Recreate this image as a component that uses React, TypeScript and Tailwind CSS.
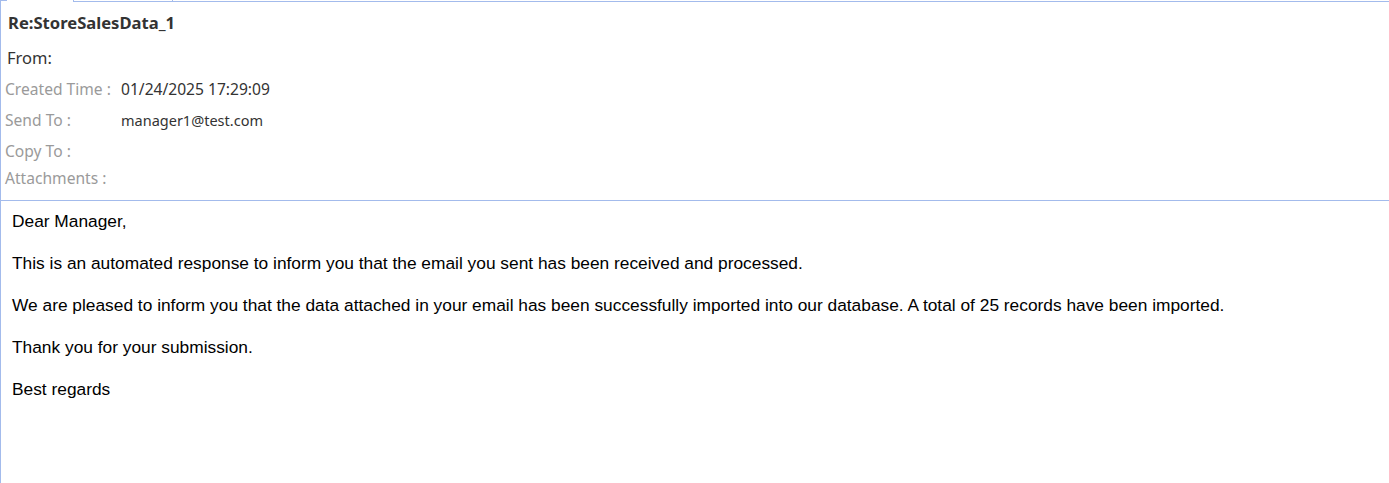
const rows = [
  { label: 'Created Time :', value: '01/24/2025 17:29:09', h: 'h-[31px]', size: 'text-[15.6px]' },
  { label: 'Send To :', value: 'manager1@test.com', h: 'h-[31px]', size: 'text-[14.5px]' },
  { label: 'Copy To :', value: '', h: 'h-[31px]', size: 'text-[15.6px]' },
  { label: 'Attachments :', value: '', h: 'h-[23px]', size: 'text-[15.6px]' },
]

const paragraphs = [
  'Dear Manager,',
  'This is an automated response to inform you that the email you sent has been received and processed.',
  'We are pleased to inform you that the data attached in your email has been successfully imported into our database. A total of 25 records have been imported.',
  'Thank you for your submission.',
  'Best regards',
]

export default function App() {
  return (
    <div className="w-[1389px] h-[483px] bg-white overflow-hidden">
      <div className="h-full border-l border-[#a3bbec] flex flex-col">
        {/* tab strip */}
        <div className="flex h-[2px]">
          <div className="w-[6px] border-t border-[#a3bbec]" />
          <div className="w-[66px]" />
          <div className="flex-1 border-b border-l border-[#a3bbec] flex">
            <div className="w-[99px] border-r border-[#a3bbec]" />
          </div>
        </div>

        {/* header */}
        <div className="font-['Noto_Sans','Open_Sans',sans-serif] text-[#333]">
          <div className="h-[41px] pl-[7px] pt-[11px] text-[16.6px] font-bold leading-[20px]">Re:StoreSalesData_1</div>
          <div className="h-[31px] pl-[6px] text-[16.5px] leading-[29px]">From:</div>
          {rows.map((r) => (
            <div key={r.label} className={`flex items-center text-[15.6px] ${r.h}`}>
              <div className="w-[120px] pl-[4px] text-[#9a9a9a]">{r.label}</div>
              <div className={`text-[#333] ${r.size}`}>{r.value}</div>
            </div>
          ))}
        </div>

        <div className="mt-[10px] border-t border-[#a3bbec]" />

        {/* body */}
        <div className="pt-[10px] pl-[11px] font-['Liberation_Sans',Arial,sans-serif] text-[17.33px] leading-[20px] text-black">
          {paragraphs.map((p) => (
            <p key={p} className="mb-[22px]">{p}</p>
          ))}
        </div>
      </div>
    </div>
  )
}
